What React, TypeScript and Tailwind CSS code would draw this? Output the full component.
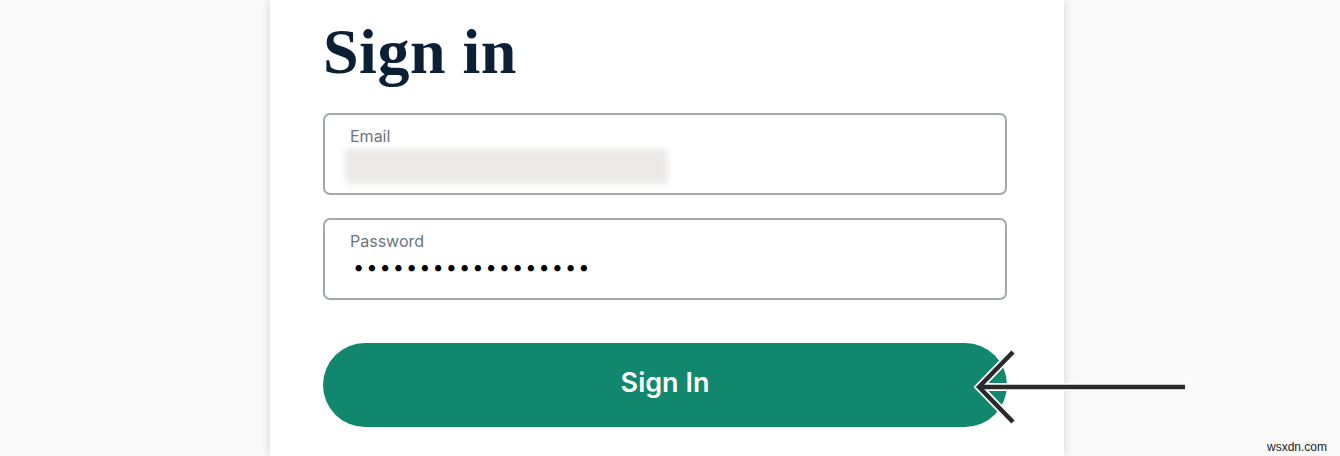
import React from 'react';

const Field: React.FC<{ label: string; children: React.ReactNode }> = ({ label, children }) => (
  <div className="h-[82px] w-[684px] rounded-[7px] border-2 border-[#a3a8ad] px-[25px] pt-[11px]">
    <div className="text-[16px] leading-[20px] text-[#6b7480]">{label}</div>
    {children}
  </div>
);

const App: React.FC = () => {
  return (
    <div className="relative h-[456px] w-[1340px] overflow-hidden bg-[#fafafa] font-['Inter',sans-serif]">
      <div className="ml-[270px] h-[456px] w-[794px] bg-white pl-[53px] pt-[16px] shadow-[0_0_10px_rgba(0,0,0,0.16)]">
        <h1 className="font-['Liberation_Serif',serif] text-[64px] font-bold leading-[72px] tracking-[0.5px] text-[#0b2035]">
          Sign in
        </h1>
        <div className="mt-[25px] flex flex-col gap-[23px]">
          <Field label="Email">
            <div className="-ml-[5px] mt-[3px] h-[35px] w-[323px] rounded-[3px] bg-[#ebeae9] blur-[3px]" />
          </Field>
          <Field label="Password">
            <div className="mt-[3px] pl-[3px] text-[20px] leading-[26px] tracking-[2px] text-black">
              ••••••••••••••••••
            </div>
          </Field>
        </div>
        <button className="mt-[43px] flex h-[84px] w-[684px] items-center justify-center rounded-full bg-[#11876d] pb-[4px] text-[27px] font-semibold text-white">
          Sign In
        </button>
      </div>

      <svg className="absolute left-[970px] top-[345px]" width="220" height="84" viewBox="0 0 220 84">
        <g stroke="#ffffff" strokeWidth="8" fill="none" strokeLinecap="butt">
          <path d="M43 7 L9 42 L43 77" />
          <path d="M12 42 H215" />
        </g>
        <g stroke="#2a2a2a" strokeWidth="4.5" fill="none" strokeLinecap="butt">
          <path d="M43 7 L9 42 L43 77" />
          <path d="M12 42 H215" />
        </g>
      </svg>

      <div className="absolute left-[1267px] top-[438px] font-['Liberation_Sans',sans-serif] text-[12px] text-[#222]">
        wsxdn.com
      </div>
    </div>
  );
};

export default App;
